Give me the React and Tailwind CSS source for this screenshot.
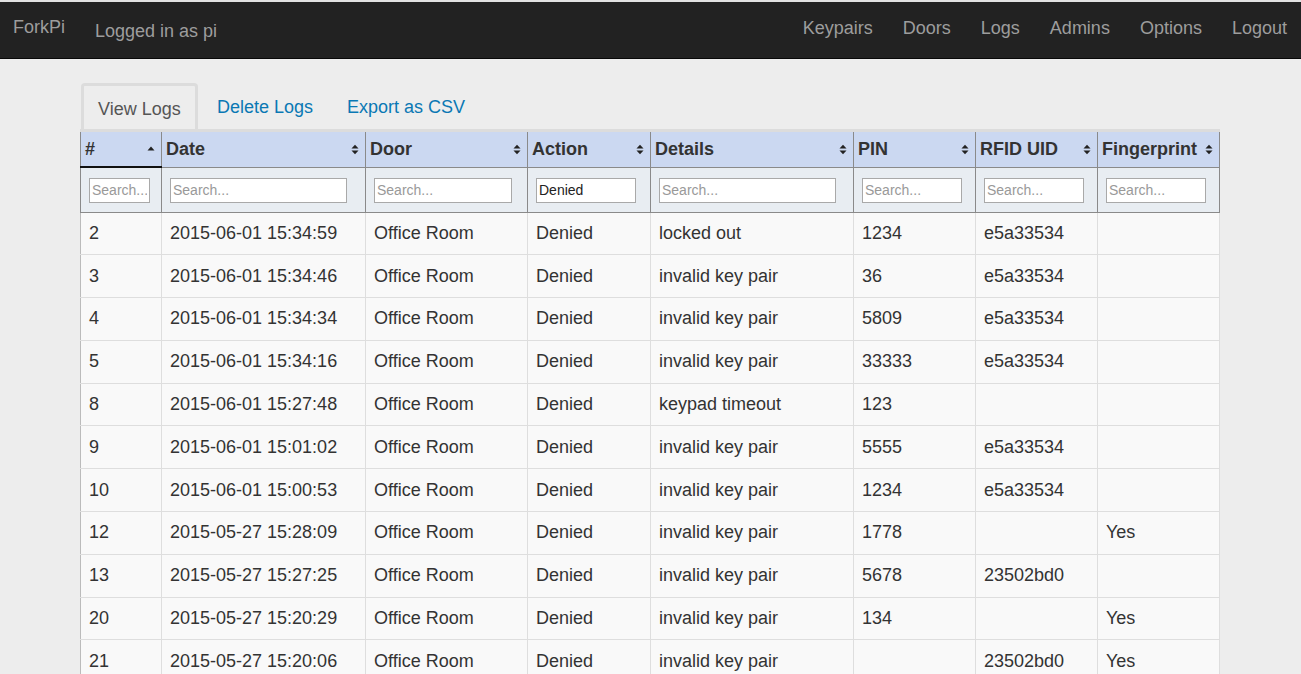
import React from "react";

const cols = [
  { name: "#", w: 81, iw: 61, sorted: true },
  { name: "Date", w: 204, iw: 177 },
  { name: "Door", w: 162, iw: 138 },
  { name: "Action", w: 123, iw: 100, value: "Denied" },
  { name: "Details", w: 203, iw: 177 },
  { name: "PIN", w: 122, iw: 100 },
  { name: "RFID UID", w: 122, iw: 100 },
  { name: "Fingerprint", w: 122, iw: 100 },
];

const rows = [
  ["2", "2015-06-01 15:34:59", "Office Room", "Denied", "locked out", "1234", "e5a33534", ""],
  ["3", "2015-06-01 15:34:46", "Office Room", "Denied", "invalid key pair", "36", "e5a33534", ""],
  ["4", "2015-06-01 15:34:34", "Office Room", "Denied", "invalid key pair", "5809", "e5a33534", ""],
  ["5", "2015-06-01 15:34:16", "Office Room", "Denied", "invalid key pair", "33333", "e5a33534", ""],
  ["8", "2015-06-01 15:27:48", "Office Room", "Denied", "keypad timeout", "123", "", ""],
  ["9", "2015-06-01 15:01:02", "Office Room", "Denied", "invalid key pair", "5555", "e5a33534", ""],
  ["10", "2015-06-01 15:00:53", "Office Room", "Denied", "invalid key pair", "1234", "e5a33534", ""],
  ["12", "2015-05-27 15:28:09", "Office Room", "Denied", "invalid key pair", "1778", "", "Yes"],
  ["13", "2015-05-27 15:27:25", "Office Room", "Denied", "invalid key pair", "5678", "23502bd0", ""],
  ["20", "2015-05-27 15:20:29", "Office Room", "Denied", "invalid key pair", "134", "", "Yes"],
  ["21", "2015-05-27 15:20:06", "Office Room", "Denied", "invalid key pair", "", "23502bd0", "Yes"],
];

function SortIcon({ up }) {
  if (up) {
    return (
      <svg width="8" height="10" viewBox="0 0 8 10" className="shrink-0">
        <path d="M0.5 6.5 L4 2.5 L7.5 6.5 Z" fill="#222" />
      </svg>
    );
  }
  return (
    <svg width="8" height="11" viewBox="0 0 8 11" className="shrink-0">
      <path d="M0.5 4.5 L4 0.8 L7.5 4.5 Z" fill="#222" />
      <path d="M0.5 6.5 L4 10.2 L7.5 6.5 Z" fill="#222" />
    </svg>
  );
}

export default function App() {
  return (
    <div
      className="min-h-[674px] bg-[#ededed] text-[#333]"
      style={{ fontFamily: '"Liberation Sans", Arial, sans-serif' }}
    >
      <div className="border-t-2 border-[#e2e2e2]">
        <nav className="flex h-[57px] items-center bg-[#222] border-b border-[#080808] text-[18px] text-[#9d9d9d]">
          <span className="ml-[13px] -mt-[6px]">ForkPi</span>
          <span className="ml-[30px] mt-[2px]">Logged in as pi</span>
          <div className="ml-auto mr-[14px] flex gap-[30px] -mt-[3px]">
            <span>Keypairs</span>
            <span>Doors</span>
            <span>Logs</span>
            <span>Admins</span>
            <span>Options</span>
            <span>Logout</span>
          </div>
        </nav>
      </div>

      <div className="ml-[80px] w-[1140px] pt-[24px]">
        <div className="flex items-end border-b-[3px] border-[#dcdcdc] text-[18px]">
          <div className="ml-px h-[46px] w-[117px] rounded-t-[4px] border-[3px] border-b-0 border-[#dcdcdc] bg-[#ededed] pl-[14px] pt-[10px] text-[#555]">
            View Logs
          </div>
          <div className="h-[46px] pl-[19px] pt-[11px] text-[#0a78b4]">Delete Logs</div>
          <div className="h-[46px] pl-[34px] pt-[11px] text-[#0a78b4]">Export as CSV</div>
        </div>

        <table className="table-fixed border-collapse w-[1140px] text-[18px]">
          <colgroup>
            {cols.map((c) => (
              <col key={c.name} style={{ width: c.w }} />
            ))}
          </colgroup>
          <thead>
            <tr className="h-[35px] bg-[#cbd8f1]">
              {cols.map((c) => (
                <th
                  key={c.name}
                  className={
                    "border-x border-[#8a8a8a] px-[4px] text-left font-bold text-[#333] " +
                    (c.sorted ? "border-b-2 border-b-[#111]" : "border-b border-b-[#8a8a8a]")
                  }
                >
                  <div className="flex items-center justify-between pr-[2px]">
                    <span>{c.name}</span>
                    <SortIcon up={c.sorted} />
                  </div>
                </th>
              ))}
            </tr>
            <tr className="h-[45px] bg-[#e8edf2]">
              {cols.map((c) => (
                <td key={c.name} className="border border-[#8a8a8a] pl-[8px] pt-[1px]">
                  <input
                    readOnly
                    defaultValue={c.value || ""}
                    placeholder="Search..."
                    style={{ width: c.iw }}
                    className="block h-[25px] border border-[#a9a9a9] bg-white px-[2px] text-[14px] text-[#222] placeholder:text-[#999] outline-none"
                  />
                </td>
              ))}
            </tr>
          </thead>
          <tbody>
            {rows.map((r, i) => (
              <tr key={i} className="h-[42.8px] bg-[#f9f9f9]">
                {r.map((v, j) => (
                  <td
                    key={j}
                    className={
                      "border border-[#dedede] px-[8px] text-[#333] " +
                      (j === 0 ? "border-l-[#bbb]" : "")
                    }
                  >
                    {v}
                  </td>
                ))}
              </tr>
            ))}
          </tbody>
        </table>
      </div>
    </div>
  );
}
